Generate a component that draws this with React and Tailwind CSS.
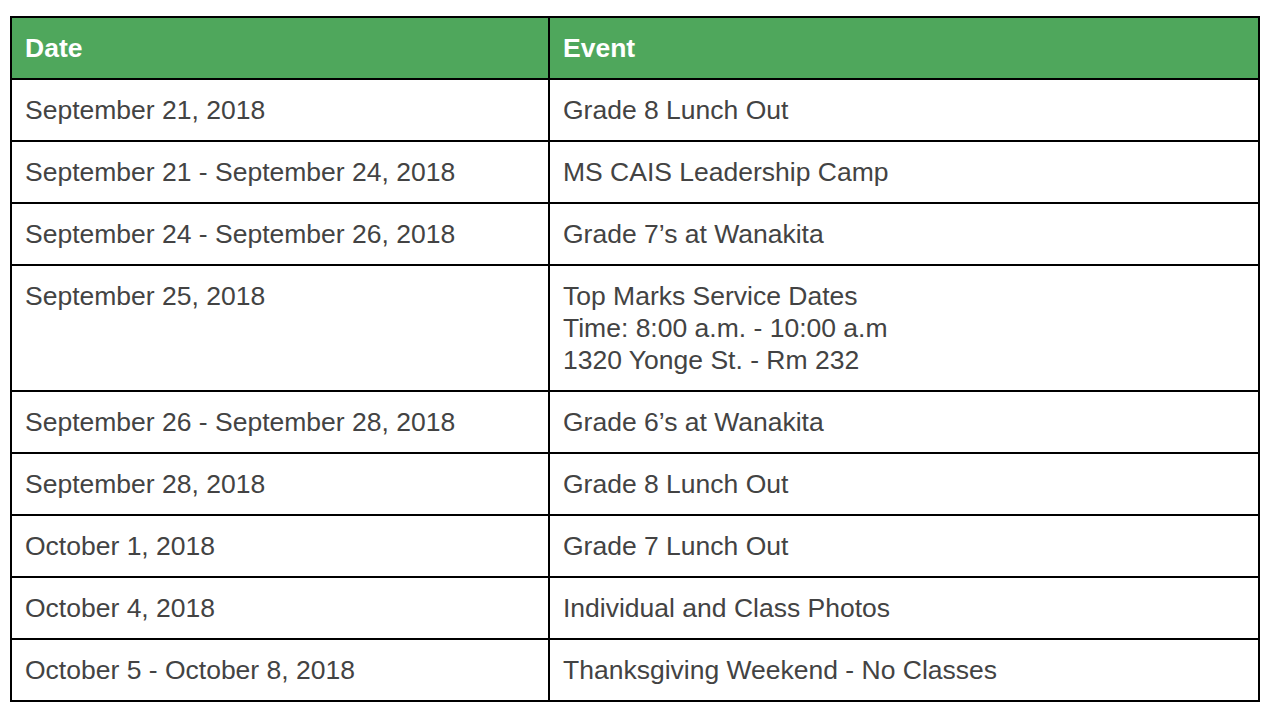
export default function App() {
  const rows = [
    ["September 21, 2018", ["Grade 8 Lunch Out"]],
    ["September 21 - September 24, 2018", ["MS CAIS Leadership Camp"]],
    ["September 24 - September 26, 2018", ["Grade 7\u2019s at Wanakita"]],
    ["September 25, 2018", ["Top Marks Service Dates", "Time: 8:00 a.m. - 10:00 a.m", "1320 Yonge St. - Rm 232"]],
    ["September 26 - September 28, 2018", ["Grade 6\u2019s at Wanakita"]],
    ["September 28, 2018", ["Grade 8 Lunch Out"]],
    ["October 1, 2018", ["Grade 7 Lunch Out"]],
    ["October 4, 2018", ["Individual and Class Photos"]],
    ["October 5 - October 8, 2018", ["Thanksgiving Weekend - No Classes"]],
  ];
  return (
    <div className="min-h-[722px] w-[1276px] bg-white pt-[16px] pl-[10px]" style={{ fontFamily: '"Liberation Sans", Arial, sans-serif' }}>
      <div className="w-[1250px] border-2 border-black text-[26.5px] leading-[32px] text-[#434343]">
        <div className="flex border-b-2 border-black bg-[#4fa75c] font-bold text-white">
          <div className="w-[536px] px-[13px] py-[14px]">Date</div>
          <div className="flex-1 border-l-2 border-black px-[13px] py-[14px]">Event</div>
        </div>
        {rows.map(([d, ev], i) => (
          <div key={i} className={i < rows.length - 1 ? "flex border-b-2 border-black" : "flex"}>
            <div className="w-[536px] px-[13px] py-[14px]">{d}</div>
            <div className="flex-1 border-l-2 border-black px-[13px] py-[14px]">
              {ev.map((l, j) => (
                <div key={j}>{l}</div>
              ))}
            </div>
          </div>
        ))}
      </div>
    </div>
  );
}
